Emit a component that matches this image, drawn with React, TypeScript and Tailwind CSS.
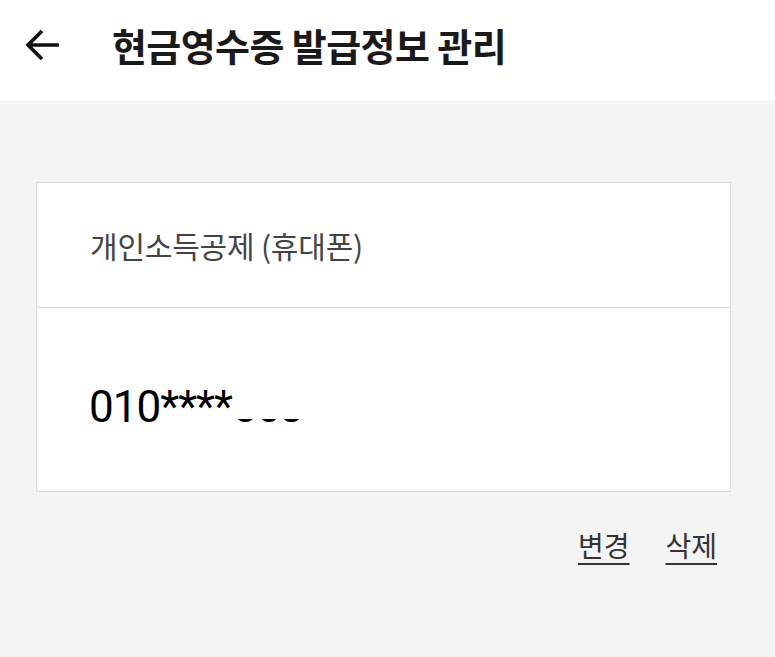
import React from "react";

const font = { fontFamily: '"Noto Sans CJK KR", "Noto Sans", sans-serif' };

export default function App() {
  return (
    <div className="w-[775px] h-[657px] bg-[#f4f4f4] flex flex-col" style={font}>
      <div className="h-[101px] bg-white flex items-center pl-[24px] shrink-0">
        <svg width="38" height="38" viewBox="0 0 38 38" className="mt-[-12px]">
          <path d="M35 19H4M18 5L4 19l14 14" fill="none" stroke="#111" strokeWidth="3.6" strokeLinecap="butt" strokeLinejoin="miter" />
        </svg>
        <div className="ml-[50px] mt-[-12px] text-[38px] font-bold text-[#1a1a1a] tracking-[-0.6px]">현금영수증 발급정보 관리</div>
      </div>
      <div className="ml-[36px] mr-[44px] mt-[81px] bg-white border border-[#dcdcdc] flex flex-col">
        <div className="h-[125px] flex items-center pl-[53px] border-b border-[#dcdcdc]">
          <span className="text-[30px] text-[#444] tracking-[-0.2px]">개인소득공제 (휴대폰)</span>
        </div>
        <div className="h-[183px] flex items-center pl-[52px]">
          <div className="relative mt-[14px] text-[44px] text-black leading-none tracking-[-1px]" style={{ fontFamily: 'Roboto, "Noto Sans", sans-serif' }}>
            <span>010****</span>
            <span>5539</span>
            <div className="absolute left-[146px] top-[-4px] w-[110px] h-[38px] bg-white" />
            <div className="absolute left-[212px] top-[-4px] w-[60px] h-[52px] bg-white" />
          </div>
        </div>
      </div>
      <div className="flex justify-end gap-[36px] mr-[58px] mt-[32px] text-[28px] text-[#333]">
        <span className="underline underline-offset-[6px] decoration-[2px]">변경</span>
        <span className="underline underline-offset-[6px] decoration-[2px]">삭제</span>
      </div>
    </div>
  );
}
